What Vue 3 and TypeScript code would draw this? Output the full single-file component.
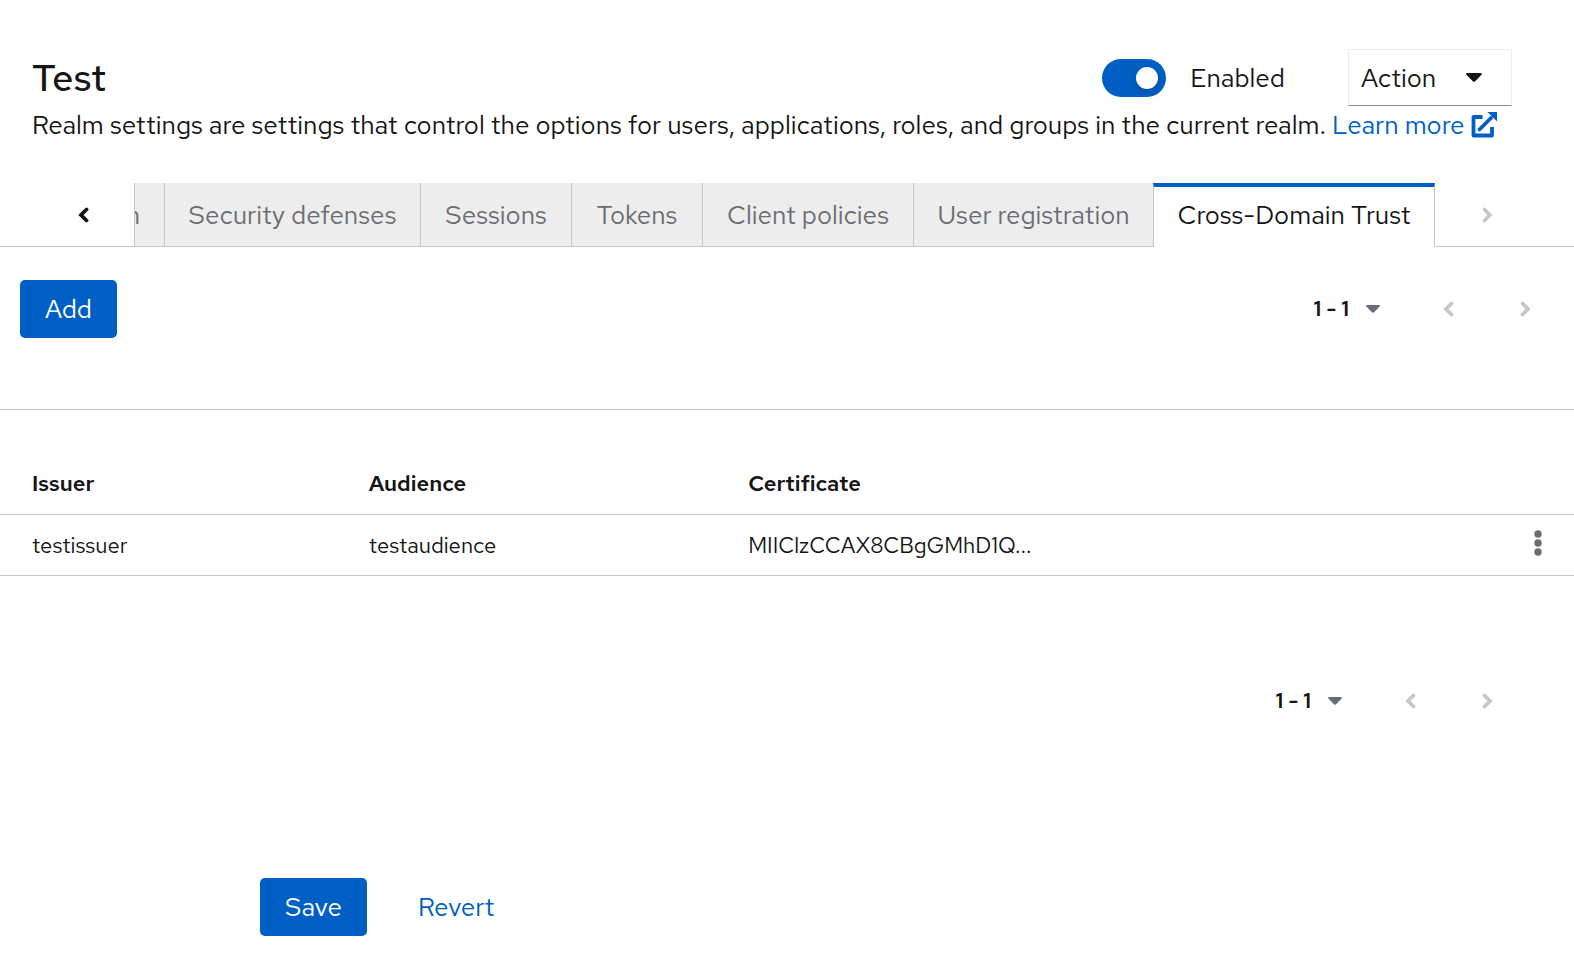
<script setup lang="ts">
import { ref } from 'vue'

interface Trust {
  issuer: string
  audience: string
  certificate: string
}

const enabled = ref(true)
const tabs: string[] = [
  'Localization',
  'Security defenses',
  'Sessions',
  'Tokens',
  'Client policies',
  'User registration',
  'Cross-Domain Trust',
]
const activeTab = ref('Cross-Domain Trust')
const trusts: Trust[] = [
  { issuer: 'testissuer', audience: 'testaudience', certificate: 'MIIClzCCAX8CBgGMhD1Q...' },
]
const pagers = ['top', 'bottom']
</script>

<template>
  <main class="page">
    <header class="header">
      <div class="title-row">
        <h1 class="title">Test</h1>
        <label class="switch">
          <input v-model="enabled" class="switch-input" type="checkbox" />
          <span>Enabled</span>
        </label>
        <button class="action" type="button">
          Action
          <svg class="caret" viewBox="0 0 16 9" width="16" height="9" aria-hidden="true">
            <path d="M1.2 0h13.6c1 0 1.4 1 .8 1.7L9.2 8.3c-.7.7-1.7.7-2.4 0L.4 1.7C-.2 1 .2 0 1.2 0z" />
          </svg>
        </button>
      </div>
      <div class="description">
        <p class="description-text">
          Realm settings are settings that control the options for users, applications, roles, and groups in the current realm.
        </p>
        <a class="learn" href="#">
          Learn more
          <svg viewBox="0 0 26 26" width="26" height="26" aria-hidden="true">
            <path d="M11.500 5H2.500v18.500h18.500V15" fill="none" stroke="currentColor" stroke-width="3.8" stroke-linejoin="round" />
            <path d="M8.5 17.5L20 6" fill="none" stroke="currentColor" stroke-width="3.8" stroke-linecap="round" />
            <path d="M16.5 0H26v9.500z" fill="currentColor" />
          </svg>
        </a>
      </div>
    </header>

    <nav class="tabs" aria-label="Realm settings">
      <button class="scroll scroll-left" type="button" aria-label="Scroll left">
        <svg class="chevron" viewBox="0 0 11 16" width="11" height="16" aria-hidden="true">
          <path d="M8.500 2.500L3 8l5.500 5.500" />
        </svg>
      </button>
      <div class="tab-list" role="tablist">
        <button
          v-for="tab in tabs"
          :key="tab"
          class="tab"
          :class="{ active: tab === activeTab }"
          type="button"
          role="tab"
          :aria-selected="tab === activeTab"
          @click="activeTab = tab"
        >
          {{ tab }}
        </button>
      </div>
      <button class="scroll scroll-right" type="button" aria-label="Scroll right" disabled>
        <svg class="chevron" viewBox="0 0 11 16" width="11" height="16" aria-hidden="true">
          <path d="M2.500 2.500L8 8l-5.500 5.500" />
        </svg>
      </button>
    </nav>

    <section class="content">
      <template v-for="pager in pagers" :key="pager">
        <div class="toolbar" :class="pager">
          <button v-if="pager === 'top'" class="primary" type="button">Add</button>
          <div class="pagination">
            <button class="range" type="button">
              1 - 1
              <svg class="caret" viewBox="0 0 16 9" width="14" height="8" aria-hidden="true">
                <path d="M1.2 0h13.6c1 0 1.4 1 .8 1.7L9.2 8.3c-.7.7-1.7.7-2.4 0L.4 1.7C-.2 1 .2 0 1.2 0z" />
              </svg>
            </button>
            <button class="step" type="button" aria-label="Previous page" disabled>
              <svg class="chevron" viewBox="0 0 11 16" width="11" height="16" aria-hidden="true">
                <path d="M8.500 2.500L3 8l5.500 5.500" />
              </svg>
            </button>
            <button class="step" type="button" aria-label="Next page" disabled>
              <svg class="chevron" viewBox="0 0 11 16" width="11" height="16" aria-hidden="true">
                <path d="M2.500 2.500L8 8l-5.500 5.500" />
              </svg>
            </button>
          </div>
        </div>

        <table v-if="pager === 'top'" class="table">
          <thead>
            <tr>
              <th class="col-issuer" scope="col">Issuer</th>
              <th class="col-audience" scope="col">Audience</th>
              <th scope="col">Certificate</th>
              <td class="col-menu"></td>
            </tr>
          </thead>
          <tbody>
            <tr v-for="trust in trusts" :key="trust.issuer">
              <td>{{ trust.issuer }}</td>
              <td>{{ trust.audience }}</td>
              <td>{{ trust.certificate }}</td>
              <td class="col-menu">
                <button class="kebab" type="button" aria-label="Row actions">
                  <svg viewBox="0 0 8 26" width="8" height="26" aria-hidden="true">
                    <circle cx="4" cy="4" r="3.700" />
                    <circle cx="4" cy="13" r="3.700" />
                    <circle cx="4" cy="22" r="3.700" />
                  </svg>
                </button>
              </td>
            </tr>
          </tbody>
        </table>
      </template>
    </section>

    <footer class="footer">
      <button class="primary" type="button">Save</button>
      <button class="link" type="button">Revert</button>
    </footer>
  </main>
</template>

<style>
body {
  margin: 0;
  background: #fff;
}
</style>

<style scoped>
.page {
  box-sizing: border-box;
  padding-top: 49px;
  color: #151515;
  font-family: 'Red Hat Text', Inter, 'Noto Sans', sans-serif;
  font-size: 26px;
  line-height: 38px;
}

button {
  margin: 0;
  padding: 0;
  border: 0;
  background: none;
  color: inherit;
  font: inherit;
  cursor: pointer;
}

button:disabled {
  color: #c7c7c7;
  cursor: default;
}

svg {
  display: block;
  flex: none;
}

.header {
  padding: 0 62px 0 32px;
}

.title-row {
  display: flex;
  align-items: center;
  height: 57px;
}

.title {
  flex: 1;
  margin: 0;
  font-size: 38px;
  font-weight: 500;
  line-height: 48px;
}

.switch {
  display: flex;
  align-items: center;
  gap: 24px;
  margin-right: 63px;
}

.switch-input {
  display: flex;
  align-items: center;
  box-sizing: border-box;
  width: 64px;
  height: 38px;
  margin: 0;
  padding: 0 8px;
  border-radius: 19px;
  background: #6a6e73;
  appearance: none;
}

.switch-input::before {
  width: 22px;
  height: 22px;
  border-radius: 50%;
  background: #fff;
  box-shadow: 0 4px 8px rgba(3, 3, 3, 0.16);
  content: '';
}

.switch-input:checked {
  justify-content: flex-end;
  background: #005fc4;
}

.action {
  display: flex;
  align-items: center;
  justify-content: space-between;
  box-sizing: border-box;
  width: 164px;
  height: 57px;
  padding: 0 29px 0 12px;
  border: 1px solid #ededed;
  border-bottom-color: #8a8d90;
}

.caret {
  fill: currentColor;
}

.description {
  display: flex;
  gap: 6px;
  white-space: nowrap;
}

.description-text {
  margin: 0;
}

.learn {
  display: flex;
  align-items: center;
  gap: 6px;
  color: #005fc4;
  text-decoration: none;
}

.tabs {
  display: flex;
  height: 64px;
  margin-top: 39px;
}

.scroll {
  display: flex;
  align-items: center;
  justify-content: center;
  box-sizing: border-box;
  border-bottom: 1px solid #c7c7c7;
}

.scroll-left {
  width: 134px;
  padding-left: 33px;
}

.scroll-right {
  width: 139px;
  padding-right: 35px;
}

.chevron {
  fill: none;
  stroke: currentColor;
  stroke-width: 3.8;
  stroke-linecap: round;
}

.tab-list {
  display: grid;
  flex: 1;
  grid-template-columns: 30fr 256fr 151fr 131fr 211fr 240fr 282fr;
  min-width: 0;
}

.tab {
  display: flex;
  justify-content: center;
  box-sizing: border-box;
  min-width: 0;
  padding-top: 13px;
  overflow: hidden;
  border-bottom: 1px solid #c7c7c7;
  border-left: 1px solid #c7c7c7;
  background: #ededed;
  color: #6a6e73;
  white-space: nowrap;
}

.tab:first-child {
  justify-content: flex-end;
  padding-right: 24px;
}

.tab.active {
  padding-top: 9px;
  border-top: 4px solid #005fc4;
  border-right: 1px solid #c7c7c7;
  border-bottom: 0;
  background: #fff;
  color: #151515;
}

.toolbar {
  display: flex;
  align-items: center;
}

.toolbar.top {
  height: 56px;
  padding: 34px 43px 72px 20px;
  border-bottom: 1px solid #c7c7c7;
}

.toolbar.bottom {
  height: 56px;
  margin-top: 97px;
  padding-right: 81px;
}

.primary {
  height: 58px;
  padding: 0 25px;
  border-radius: 5px;
  background: #005fc4;
  color: #fff;
}

.pagination {
  display: flex;
  align-items: center;
  margin-left: auto;
}

.range {
  display: flex;
  align-items: center;
  gap: 17px;
  margin-right: 63px;
  font-size: 22px;
  font-weight: 600;
}

.range .caret {
  color: #6a6e73;
}

.step + .step {
  margin-left: 66px;
}

.table {
  width: 100%;
  margin-top: 43px;
  border-collapse: collapse;
  table-layout: fixed;
  font-size: 22px;
}

th,
td {
  box-sizing: border-box;
  height: 61px;
  padding: 2px 0 0 32px;
  border-bottom: 1px solid #c7c7c7;
  text-align: left;
}

th {
  font-weight: 600;
}

.col-issuer {
  width: 21.4%;
}

.col-audience {
  width: 24.1%;
}

.col-menu {
  width: 73px;
  padding: 0 0 4px 33px;
}

.kebab {
  display: block;
}

.kebab svg {
  fill: #6a6e73;
}

.footer {
  display: flex;
  align-items: center;
  gap: 51px;
  padding: 149px 0 32px 260px;
}

.link {
  color: #005fc4;
}
</style>
